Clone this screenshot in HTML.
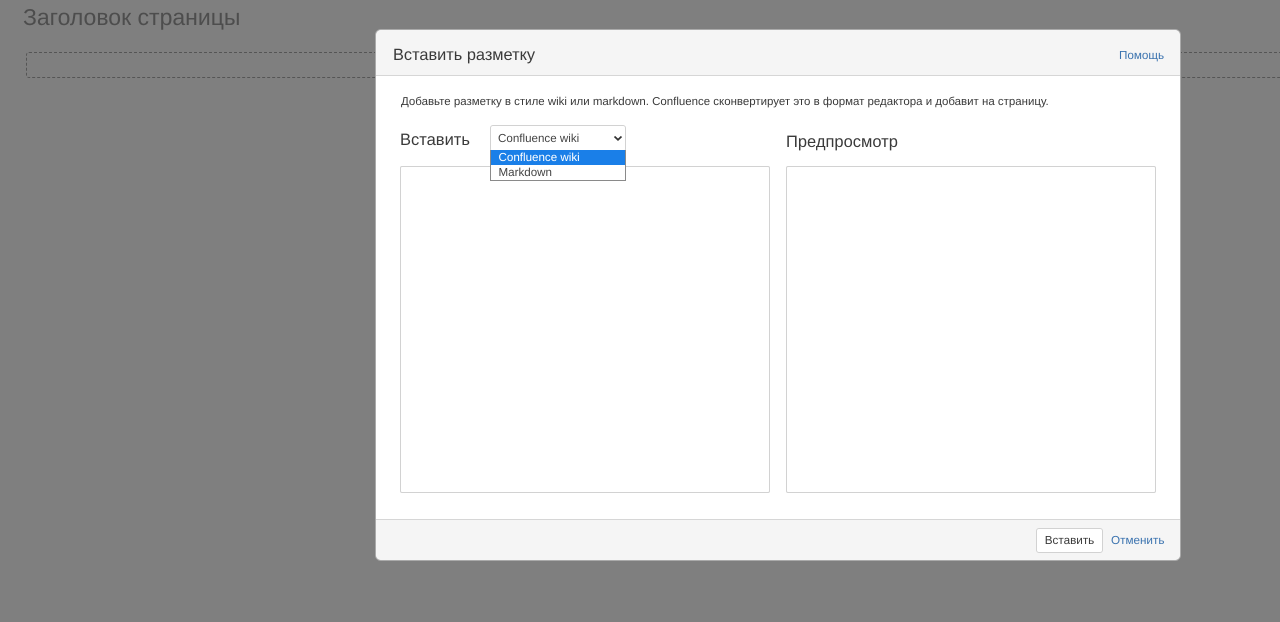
<!DOCTYPE html>
<html><head><meta charset="utf-8"><style>
html,body{margin:0;padding:0;width:1280px;height:622px;overflow:hidden;background:#7f7f7f;font-family:"Liberation Sans","Noto Sans CJK SC",sans-serif;color:#333;text-rendering:geometricPrecision}
.a{position:absolute;white-space:nowrap}
a{color:#3b73af;text-decoration:none}
</style></head><body>
<div class="a" style="left:23px;top:3px;font-size:23px;line-height:28px;color:#4d4d4d">Заголовок страницы</div>
<div class="a" style="left:26px;top:52px;width:1300px;height:24px;border:1px dashed #555;border-radius:3px"></div>
<div class="a" style="left:376px;top:30px;width:804px;height:530px;background:#fff;border-radius:5px;box-shadow:0 0 0 1px #aaa;overflow:hidden">
 <div class="a" style="left:0;top:0;width:804px;height:45px;background:#f5f5f5;border-bottom:1px solid #d6d6d6"></div>
 <div class="a" style="left:17px;top:15px;font-size:16.35px;line-height:20px;color:#3a3a3a">Вставить разметку</div>
 <a class="a" style="left:743px;top:18px;font-size:11.7px;line-height:16px">Помощь</a>
 <div class="a" style="left:25px;top:64px;font-size:11.47px;line-height:16px;color:#3a3a3a">Добавьте разметку в стиле wiki или markdown. Confluence сконвертирует это в формат редактора и добавит на страницу.</div>
 <div class="a" style="left:24px;top:100px;font-size:16.5px;line-height:20px;color:#3a3a3a">Вставить</div>
 <div class="a" style="left:410px;top:102px;font-size:16.5px;line-height:20px;color:#3a3a3a">Предпросмотр</div>
 <div class="a" style="left:24px;top:136px;width:368px;height:325px;border:1px solid #d2d2d2;border-radius:2px;background:#fff"></div>
 <div class="a" style="left:410px;top:136px;width:368px;height:325px;border:1px solid #d2d2d2;border-radius:2px;background:#fff"></div>
 <div class="a" style="left:114px;top:95px;width:134px;height:25px;border:1px solid #d2d2d2;border-radius:3px;background:#fff"></div>
 <div class="a" style="left:122px;top:101px;font-size:11.6px;line-height:16px;color:#444">Confluence wiki</div>
 <svg class="a" style="left:237px;top:105px" width="10" height="7" viewBox="0 0 10 7"><path d="M1.5 1.5L5 4.8L8.500 1.500" fill="none" stroke="#333" stroke-width="1.700"/></svg>
 <div class="a" style="left:114px;top:120px;width:134px;height:30px;border:1px solid #8a8a8a;border-top:0;background:#fff;font-size:11.6px;line-height:15px;color:#444">
  <div style="background:#1a7fe8;color:#fff;padding-left:7.500px;height:15px">Confluence wiki</div>
  <div style="padding-left:7.500px;height:15px">Markdown</div>
 </div>
 <div class="a" style="left:0;top:489px;width:804px;height:41px;background:#f5f5f5;border-top:1px solid #d6d6d6"></div>
 <div class="a" style="left:660px;top:498px;width:65px;height:23px;border:1px solid #d2d2d2;border-radius:3px;background:#fff;font-size:11.7px;line-height:23px;text-align:center;color:#3a3a3a">Вставить</div>
 <a class="a" style="left:735px;top:503px;font-size:11.7px;line-height:16px">Отменить</a>
</div>
</body></html>
